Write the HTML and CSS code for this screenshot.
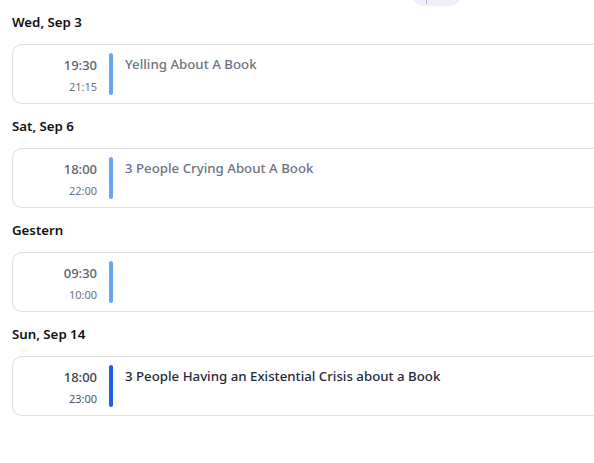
FILE: index.html
```html
<!DOCTYPE html>
<html lang="de">
<head>
<meta charset="utf-8">
<link rel="stylesheet" href="styles.css">
</head>
<body>
<div class="fab"><span class="fab-line"></span></div>
<div class="agenda">
  <section class="group">
    <h2 class="day">Wed, Sep 3</h2>
    <div class="card past">
      <div class="times"><span class="start">19:30</span><span class="end">21:15</span></div>
      <span class="bar"></span>
      <div class="title">Yelling About A Book</div>
    </div>
  </section>
  <section class="group">
    <h2 class="day">Sat, Sep 6</h2>
    <div class="card past">
      <div class="times"><span class="start">18:00</span><span class="end">22:00</span></div>
      <span class="bar"></span>
      <div class="title">3 People Crying About A Book</div>
    </div>
  </section>
  <section class="group">
    <h2 class="day">Gestern</h2>
    <div class="card past">
      <div class="times"><span class="start">09:30</span><span class="end">10:00</span></div>
      <span class="bar"></span>
      <div class="title"></div>
    </div>
  </section>
  <section class="group">
    <h2 class="day">Sun, Sep 14</h2>
    <div class="card">
      <div class="times"><span class="start">18:00</span><span class="end">23:00</span></div>
      <span class="bar"></span>
      <div class="title">3 People Having an Existential Crisis about a Book</div>
    </div>
  </section>
</div>
</body>
</html>
```
FILE: styles.css
```css
html, body {
  margin: 0;
  padding: 0;
  background: #ffffff;
  overflow: hidden;
}
body {
  font-family: "Noto Sans", "Open Sans", sans-serif;
  color: #111827;
  width: 594px;
  height: 463px;
  position: relative;
}
.agenda {
  padding: 12px 0 0 12px;
}
.group {
  margin-bottom: 12px;
}
.day {
  margin: 0 0 12px 0;
  font-size: 13.25px;
  line-height: 20px;
  font-weight: 600;
  color: #111;
}
.card {
  display: flex;
  align-items: stretch;
  height: 58px;
  border: 1px solid #dcdfe4;
  border-right: none;
  border-radius: 10px 0 0 10px;
  padding: 0 0 0 12px;
}
.times {
  width: 72px;
  display: flex;
  flex-direction: column;
  align-items: flex-end;
  padding-top: 11px;
}
.start {
  font-size: 13px;
  line-height: 18px;
  font-weight: 500;
  color: #374151;
}
.end {
  font-size: 11px;
  line-height: 16px;
  margin-top: 5px;
  color: #4b5563;
}
.past .start { color: #5b6270; }
.past .end { color: #6b7280; }
.bar {
  width: 4px;
  margin: 8px 12px;
  border-radius: 2px;
  background: #1d5fe6;
}
.past .bar { background: #67a3f3; }
.title {
  padding-top: 10px;
  font-size: 13.25px;
  line-height: 18px;
  font-weight: 500;
  color: #1f2937;
}
.past .title { color: #6b7280; }
.fab {
  position: absolute;
  left: 411px;
  top: -20px;
  width: 51px;
  height: 26px;
  border-radius: 13px;
  background: #eef0fc;
}
.fab-line {
  position: absolute;
  left: 15px;
  top: 20px;
  width: 1px;
  height: 4px;
  background: #a9b0d8;
}
```
